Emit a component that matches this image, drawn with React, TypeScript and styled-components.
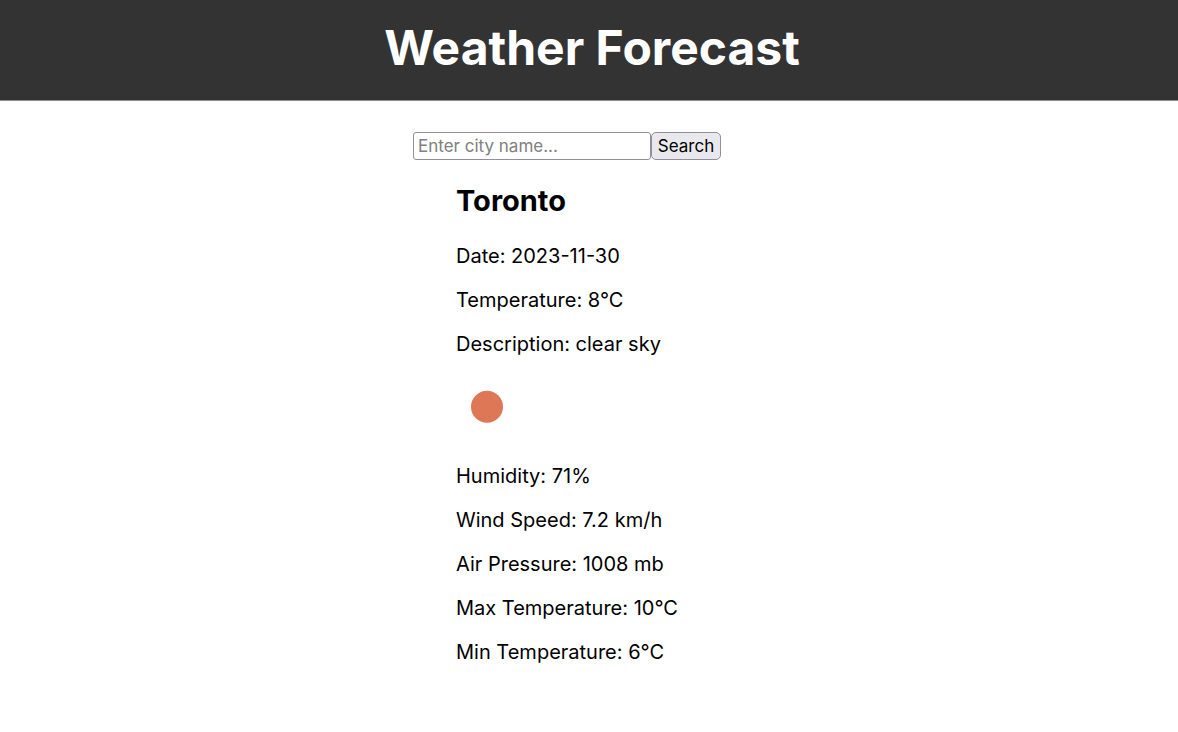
import React from 'react';
import styled, { createGlobalStyle } from 'styled-components';

const GlobalStyle = createGlobalStyle`
  body {
    margin: 0;
    background: #fff;
    color: #000;
    font-family: Inter, "Liberation Sans", sans-serif;
    font-size: 20px;
    line-height: 24px;
  }
`;

const Header = styled.header`
  background: #333;
  color: #fff;
  padding: 18px 0 22px;
  border-bottom: 1px solid #8c8c8c;
  text-align: center;
`;

const Title = styled.h1`
  margin: 0 0 0 6px;
  font-size: 48px;
  line-height: 60px;
  font-weight: 700;
`;

const Main = styled.main`
  display: flex;
  flex-direction: column;
  align-items: center;
  padding-top: 31px;
`;

const SearchForm = styled.form`
  display: flex;
  margin-right: 44px;
`;

const CityInput = styled.input`
  box-sizing: border-box;
  width: 238px;
  height: 28px;
  padding: 0 4px;
  border: 1px solid #8f8f9d;
  border-radius: 3px;
  background: #fff;
  font: 17px Inter, "Liberation Sans", sans-serif;
  &::placeholder { color: #808080; opacity: 1; }
`;

const SearchButton = styled.button`
  box-sizing: border-box;
  width: 70px;
  height: 28px;
  padding: 0;
  border: 1px solid #8f8f9d;
  border-radius: 5px;
  background: #e9e9ed;
  color: #000;
  font: 17px Inter, "Liberation Sans", sans-serif;
`;

const Report = styled.section`
  display: flex;
  flex-direction: column;
  gap: 20px;
  width: 266px;
  padding: 22px 0 20px;
`;

const City = styled.h2`
  margin: 0 0 4px;
  font-size: 29px;
  line-height: 38px;
  font-weight: 700;
`;

const Detail = styled.p`
  margin: 0;
`;

const ConditionIcon = styled.svg`
  display: block;
  width: 62px;
  height: 62px;
  margin: 0 0 6px;
`;

const conditions = ['Date: 2023-11-30', 'Temperature: 8°C', 'Description: clear sky'];
const measurements = [
  'Humidity: 71%',
  'Wind Speed: 7.2 km/h',
  'Air Pressure: 1008 mb',
  'Max Temperature: 10°C',
  'Min Temperature: 6°C',
];

export default function App() {
  return (
    <>
      <GlobalStyle />
      <Header>
        <Title>Weather Forecast</Title>
      </Header>
      <Main>
        <SearchForm onSubmit={(event) => event.preventDefault()}>
          <CityInput type="text" aria-label="City name" placeholder="Enter city name..." />
          <SearchButton type="submit">Search</SearchButton>
        </SearchForm>
        <Report>
          <City>Toronto</City>
          {conditions.map((text) => <Detail key={text}>{text}</Detail>)}
          <ConditionIcon viewBox="0 0 62 62" role="img" aria-label="clear sky">
            <circle cx="31" cy="30.7" r="16" fill="#dd7755" />
          </ConditionIcon>
          {measurements.map((text) => <Detail key={text}>{text}</Detail>)}
        </Report>
      </Main>
    </>
  );
}
